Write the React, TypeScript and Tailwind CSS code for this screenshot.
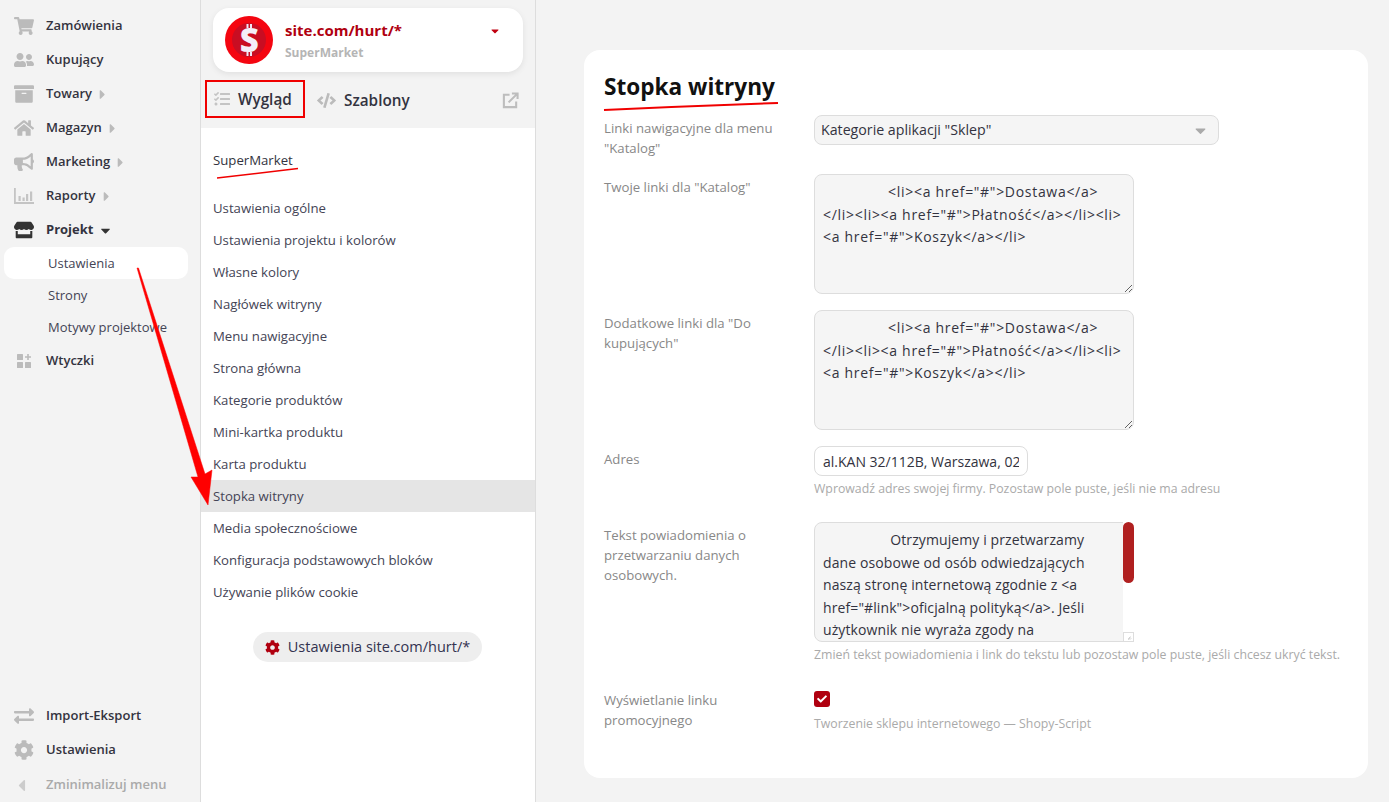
import { FaShoppingCart, FaUserFriends, FaArchive, FaHome, FaBullhorn, FaStore, FaExchangeAlt, FaCog, FaCaretLeft, FaCaretRight, FaCaretDown, FaCode, FaTasks, FaCheck } from "react-icons/fa";
import type { ReactNode } from "react";

const font = "font-['Open_Sans','Noto_Sans',sans-serif]";

function PluginsIcon() {
  return (
    <svg viewBox="0 0 16 16" className="h-[16px] w-[16px]" fill="#bbbbbb">
      <rect x="1" y="1" width="6" height="6" rx="0.5" />
      <rect x="1" y="9" width="6" height="6" rx="0.5" />
      <rect x="9" y="9" width="6" height="6" rx="0.5" />
      <path d="M11.2 1h1.6v2.2H15v1.6h-2.2V7h-1.6V4.8H9V3.2h2.2z" />
    </svg>
  );
}

function ReportsIcon() {
  return (
    <svg viewBox="0 0 20 16" className="h-[16px] w-[20px]" fill="#c4c4c4">
      <path d="M0 0h1.800v14H20v2H0z" />
      <rect x="4.500" y="8" width="2.200" height="5" />
      <rect x="8.500" y="9.500" width="2.200" height="3.500" />
      <rect x="12" y="6" width="2.200" height="7" />
      <rect x="16" y="3.500" width="2.200" height="9.500" />
    </svg>
  );
}

function ExternalIcon() {
  return (
    <svg viewBox="0 0 18 18" className="h-[17px] w-[17px]" fill="none" stroke="#bdbdbd" strokeWidth="2.2">
      <path d="M8 3H2v13h13v-6" />
      <path d="M7 11 16 2M10.5 1.5H16.5V7.5" />
    </svg>
  );
}

function NavRow({ icon, label, caret, bold }: { icon: ReactNode; label: string; caret?: boolean; bold?: boolean }) {
  return (
    <div className="flex h-[34px] items-center">
      <div className={`flex w-[46px] shrink-0 items-center justify-center pl-[2px] text-[20px] ${bold ? "text-[#333333]" : "text-[#bbbbbb]"}`}>{icon}</div>
      <span className={`text-[13px] text-[#333340] ${bold ? "font-bold" : "font-semibold"}`}>{label}</span>
      {caret && <FaCaretRight className="ml-[3px] text-[15px] text-[#bbbbbb]" />}
      {bold && <FaCaretDown className="ml-[5px] text-[15px] text-[#333333]" />}
    </div>
  );
}

function SubRow({ label, active }: { label: string; active?: boolean }) {
  return (
    <div className={`ml-[4px] mr-[12px] flex h-[32px] items-center rounded-[10px] pl-[44px] pt-[1px] text-[13px] text-[#444455] ${active ? "bg-white" : ""}`}>
      {label}
    </div>
  );
}

function Sidebar() {
  return (
    <aside className="flex h-full w-[201px] shrink-0 flex-col justify-between border-r border-[#dddddd] bg-[#f3f3f3] pt-[9px]">
      <div>
        <NavRow icon={<FaShoppingCart />} label="Zamówienia" />
        <NavRow icon={<FaUserFriends />} label="Kupujący" />
        <NavRow icon={<FaArchive />} label="Towary" caret />
        <NavRow icon={<FaHome />} label="Magazyn" caret />
        <NavRow icon={<FaBullhorn />} label="Marketing" caret />
        <NavRow icon={<ReportsIcon />} label="Raporty" caret />
        <NavRow icon={<FaStore />} label="Projekt" bold />
        <SubRow label="Ustawienia" active />
        <SubRow label="Strony" />
        <SubRow label="Motywy projektowe" />
        <div className="mt-[1px]">
          <NavRow icon={<PluginsIcon />} label="Wtyczki" />
        </div>
      </div>
      <div>
        <NavRow icon={<FaExchangeAlt />} label="Import-Eksport" />
        <NavRow icon={<FaCog />} label="Ustawienia" />
        <div className="flex h-[35px] items-center pt-[1px]">
          <div className="flex w-[46px] shrink-0 items-center justify-center pr-[4px] text-[19px] text-[#cccccc]"><FaCaretLeft /></div>
          <span className="text-[13px] font-semibold text-[#aaaaaa]">Zminimalizuj menu</span>
        </div>
      </div>
    </aside>
  );
}

const menu = [
  "Ustawienia ogólne", "Ustawienia projektu i kolorów", "Własne kolory", "Nagłówek witryny", "Menu nawigacyjne",
  "Strona główna", "Kategorie produktów", "Mini-kartka produktu", "Karta produktu", "Stopka witryny",
  "Media społecznościowe", "Konfiguracja podstawowych bloków", "Używanie plików cookie",
];

function Coin() {
  return (
    <svg viewBox="0 0 48 48" className="h-[48px] w-[48px] shrink-0">
      <circle cx="24" cy="24" r="24" fill="#f40510" />
      <circle cx="24" cy="24" r="17" fill="#c90d22" />
      <path d="M21.500 8h2v4h-2zM25 8h2v4h-2zM21.500 36h2v4h-2zM25 36h2v4h-2z" fill="#efe6f4" />
      <text x="24.200" y="35.500" textAnchor="middle" fontSize="33" fontWeight="800" fill="#f4eef8" fontFamily="Open Sans">S</text>
    </svg>
  );
}

function DesignColumn() {
  return (
    <div className="flex h-full w-[335px] shrink-0 flex-col border-r border-[#dddddd] bg-white">
      <div className="h-[128px] shrink-0 bg-[#f3f3f3] px-[12px] pt-[8px]">
        <div className="flex h-[64px] w-[310px] items-start rounded-[16px] bg-white pl-[12px] pt-[8px] shadow-[0_2px_6px_rgba(0,0,0,0.08)]">
          <Coin />
          <div className="ml-[12px] mt-[4px]">
            <div className="text-[15px] font-bold leading-[20px] text-[#b00010]">site.com/hurt/*</div>
            <div className="mt-[4px] text-[12px] font-bold leading-[18px] text-[#b5b5b5]">SuperMarket</div>
          </div>
          <FaCaretDown className="ml-[87px] mt-[9px] text-[12px] text-[#c00010]" />
        </div>
        <div className="mt-[9px] flex h-[38px] items-center">
          <div className="-ml-[8px] -mt-[2px] flex h-[38px] w-[100px] items-center border-2 border-[#f00000] pl-[7px]">
            <FaTasks className="text-[16px] text-[#c4c4c4]" />
            <span className="ml-[8px] text-[15.300px] font-semibold text-[#333340]">Wygląd</span>
          </div>
          <FaCode className="ml-[12px] text-[19px] text-[#bbbbbb]" />
          <span className="ml-[8px] text-[15.300px] font-semibold text-[#333340]">Szablony</span>
          <div className="ml-auto mr-[4px]"><ExternalIcon /></div>
        </div>
      </div>
      <div className="flex h-[64px] items-start pl-[12px] pt-[22px] text-[13.200px] leading-[20px] text-[#333340]">SuperMarket</div>
      {menu.map((m) => (
        <div key={m} className={`flex h-[32px] items-center pl-[12px] pt-[2px] text-[13.200px] text-[#444455] ${m === "Stopka witryny" ? "bg-[#e5e5e5]" : ""}`}>{m}</div>
      ))}
      <div className="mt-[24px] flex justify-center pr-[1px]">
        <div className="flex h-[30px] items-center rounded-full bg-[#eeeeee] px-[12px] text-[14.500px] text-[#333350]">
          <FaCog className="mr-[8px] text-[15px] text-[#b00010]" />
          Ustawienia site.com/hurt/*
        </div>
      </div>
    </div>
  );
}

const linksText = `               <li><a href="#">Dostawa</a>\n</li><li><a href="#">Płatność</a></li><li>\n<a href="#">Koszyk</a></li>`;
const noticeText = `                  Otrzymujemy i przetwarzamy\ndane osobowe od osób odwiedzających\nnaszą stronę internetową zgodnie z <a\nhref="#link">oficjalną polityką</a>. Jeśli\nużytkownik nie wyraża zgody na\nprzetwarzanie swoich danych osobowych,\npowinien opuścić tę stronę internetową.`;

function Row({ label, children, className }: { label: string; children: ReactNode; className?: string }) {
  return (
    <div className={`flex ${className ?? ""}`}>
      <div className="w-[210px] shrink-0 pr-[12px] pt-[3px] text-[13.200px] leading-[20px] text-[#888888]">{label}</div>
      <div className="min-w-0 flex-1">{children}</div>
    </div>
  );
}

const areaClass = `block w-[320px] rounded-[8px] border border-[#dddddd] bg-[#f5f5f5] px-[8px] py-[6px] text-[14px] leading-[22.5px] text-[#333340] outline-none ${font}`;

function Hint({ children }: { children: ReactNode }) {
  return <div className="mt-[4px] text-[12.300px] leading-[18px] text-[#aaaaaa]">{children}</div>;
}

function FooterForm() {
  return (
    <section className="h-[728px] w-[784px] rounded-[16px] bg-white px-[20px] pt-[21px]">
      <h1 className="text-[22.600px] font-bold leading-[32px] text-[#111111]">Stopka witryny</h1>
      <div className="mt-[12px]">
        <Row label={'Linki nawigacyjne dla menu "Katalog"'} className="h-[59px]">
          <div className="flex h-[30px] w-[405px] items-center justify-between rounded-[8px] border border-[#dddddd] bg-[#f5f5f5] pl-[6px] pr-[9px] text-[14.200px] text-[#333340]">
            <span>Kategorie aplikacji "Sklep"</span>
            <FaCaretDown className="text-[17px] text-[#aaaaaa]" />
          </div>
        </Row>
        <Row label={'Twoje linki dla "Katalog"'} className="h-[136px]">
          <textarea readOnly wrap="off" defaultValue={linksText} className={`${areaClass} h-[120px] tracking-[0.700px]`} />
        </Row>
        <Row label={'Dodatkowe linki dla "Do kupujących"'} className="h-[136px]">
          <textarea readOnly wrap="off" defaultValue={linksText} className={`${areaClass} h-[120px] tracking-[0.700px]`} />
        </Row>
        <Row label="Adres" className="h-[76px]">
          <input readOnly defaultValue="al.KAN 32/112B, Warszawa, 02-001" className={`block h-[30px] w-[214px] rounded-[8px] border border-[#dddddd] bg-white px-[8px] text-[14px] text-[#333340] outline-none ${font}`} />
          <Hint>Wprowadź adres swojej firmy. Pozostaw pole puste, jeśli nie ma adresu</Hint>
        </Row>
        <Row label="Tekst powiadomienia o przetwarzaniu danych osobowych." className="h-[165px]">
          <div className="relative w-[320px]">
            <textarea readOnly wrap="off" defaultValue={noticeText} className={`${areaClass} h-[120px] overflow-hidden tracking-[0.100px]`} />
            {/* scrollbar of the textarea, headless browser hides the native one */}
            <div className="absolute bottom-0 right-0 top-0 w-[11px] rounded-r-[8px] bg-white">
              <div className="h-[61px] w-[11px] rounded-full bg-[#b02020]" />
            </div>
            <svg viewBox="0 0 11 10" className="absolute bottom-0 right-0 h-[10px] w-[11px] border border-[#dddddd] bg-white">
              <path d="M5 8 8 5M7.500 8 8.500 7" stroke="#777777" strokeWidth="0.800" />
            </svg>
          </div>
          <Hint>Zmień tekst powiadomienia i link do tekstu lub pozostaw pole puste, jeśli chcesz ukryć tekst.</Hint>
        </Row>
        <Row label="Wyświetlanie linku promocyjnego">
          <div className="mt-[4px] flex h-[16px] w-[16px] items-center justify-center rounded-[3px] bg-[#b00010] text-[10px] text-white"><FaCheck /></div>
          <div className="pt-[4px]">
            <Hint>Tworzenie sklepu internetowego — Shopy-Script</Hint>
          </div>
        </Row>
      </div>
    </section>
  );
}

// red marks drawn on top of the screenshot
function Annotations() {
  return (
    <svg className="pointer-events-none absolute left-0 top-0 h-[802px] w-[1389px]" viewBox="0 0 1389 802">
      <path d="M217 178 298 168.500" stroke="#f00000" strokeWidth="1.500" fill="none" />
      <path d="M604 110 Q690 106 778 103" stroke="#f00000" strokeWidth="2" fill="none" />
      <path d="M137 268 L198 477 L191 477 L208 505 L212 470 L205 474 L138.500 268 Z" fill="#ff0000" stroke="#ff0000" strokeWidth="0.500" />
    </svg>
  );
}

export default function App() {
  return (
    <div className={`relative flex h-[802px] w-[1389px] overflow-hidden bg-[#f3f3f3] ${font}`}>
      <Sidebar />
      <DesignColumn />
      <main className="flex-1 pl-[48px] pt-[50px]">
        <FooterForm />
      </main>
      <Annotations />
    </div>
  );
}
